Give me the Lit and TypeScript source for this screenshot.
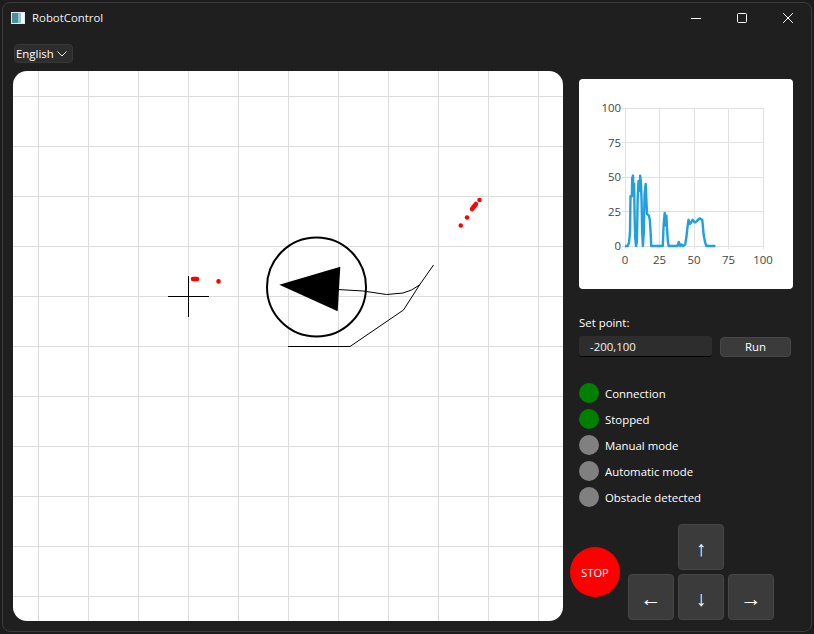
import { LitElement, html, css, svg } from 'lit';
import { customElement, property } from 'lit/decorators.js';

const UI_FONT = css`"Open Sans", "Noto Sans", "Liberation Sans", sans-serif`;

// speed samples read off the plot, [time, value]
const SAMPLES: [number, number][] = [
  [0, 0], [2, 0], [3, 3], [3.6, 10], [4, 36], [5, 36], [5.2, 49], [5.8, 51], [6.2, 37], [6.6, 45], [7, 19], [7.4, 6],
  [8, 0], [8.6, 3], [9.2, 35], [9.8, 47], [10.4, 40], [11, 51], [11.6, 45], [12, 32], [12.4, 11], [13, 0],
  [13.6, 10], [14.2, 38], [15, 45], [15.6, 31], [16, 23], [17.3, 22], [18, 19], [18.6, 9], [19, 0],
  [27.4, 0], [28, 15], [28.8, 24], [29.4, 15], [30, 22], [30.4, 13], [31, 4], [31.6, 0], [38, 0], [39, 3], [40, 0], [41, 1], [42, 0], [43.6, 1],
  [44.6, 7], [45.4, 15], [46, 19], [47, 16], [48, 17], [49, 19], [50.6, 17], [52, 18], [54, 20], [55, 19.5], [56, 19],
  [57, 8], [58, 3], [59, 0], [65.5, 0],
];

// lidar hits, [x1, y1, x2, y2] drawn as round blobs
const OBSTACLES: [number, number, number, number][] = [
  [180, 208, 184, 208], [205.5, 210.3, 205.5, 210.5],
  [466.5, 129, 466.5, 129], [463, 133, 459, 138], [454, 146.5, 454, 146.5], [447.8, 154.5, 447.8, 154.5],
];

@customElement('robot-map')
class RobotMap extends LitElement {
  static styles = css`
    :host {
      display: block;
      width: 550px;
      height: 550px;
      background: #fff;
      border-radius: 14px;
      overflow: hidden;
    }

    svg {
      display: block;
    }

    .grid {
      stroke: #dcdcdc;
      stroke-width: 1;
      shape-rendering: crispEdges;
    }

    .cross {
      stroke: #000;
      stroke-width: 1;
      shape-rendering: crispEdges;
    }

    .trail {
      fill: none;
      stroke: #000;
      stroke-width: 1;
    }

    .body {
      fill: none;
      stroke: #000;
      stroke-width: 2;
    }

    .hit {
      stroke: #f00;
      stroke-width: 4.5;
      stroke-linecap: round;
    }
  `;

  render() {
    const steps = Array.from({ length: 11 }, (_, i) => 25.5 + i * 50);
    return html`
      <svg width="550" height="550" viewBox="0 0 550 550">
        ${steps.map((p) => svg`
          <line class="grid" x1=${p} y1="0" x2=${p} y2="550"></line>
          <line class="grid" x1="0" y1=${p} x2="550" y2=${p}></line>
        `)}
        <line class="cross" x1="155" y1="225.5" x2="196" y2="225.5"></line>
        <line class="cross" x1="175.5" y1="205" x2="175.5" y2="246"></line>
        <polyline class="trail" points="275,275.5 337,275.5 390.5,239 406.5,214 420.5,194"></polyline>
        <polyline class="trail" points="325,218.5 350,220 373.5,223.5 390,222 398.5,219 406.5,214"></polyline>
        <circle class="body" cx="303.5" cy="216" r="49.5"></circle>
        <polygon points="266.3,213.7 327.3,195.7 324.7,240.3" fill="#000"></polygon>
        ${OBSTACLES.map(([x1, y1, x2, y2]) => svg`<line class="hit" x1=${x1} y1=${y1} x2=${x2} y2=${y2}></line>`)}
      </svg>
    `;
  }
}

@customElement('speed-chart')
class SpeedChart extends LitElement {
  static styles = css`
    :host {
      display: block;
      width: 214px;
      height: 210px;
      background: #fff;
      border-radius: 4px;
    }

    svg {
      display: block;
    }

    .grid {
      stroke: #e0e0e0;
      stroke-width: 1;
      shape-rendering: crispEdges;
    }

    .tick {
      font: 11.4px ${UI_FONT};
      fill: #444;
    }

    .line {
      fill: none;
      stroke: #22a0dd;
      stroke-width: 2.4;
      stroke-linejoin: round;
    }
  `;

  @property({ type: Array }) samples: [number, number][] = SAMPLES;

  render() {
    const left = 46;
    const top = 29;
    const size = 138;
    const ticks = [0, 25, 50, 75, 100];
    const px = (v: number) => left + (v / 100) * size;
    const py = (v: number) => top + size - (v / 100) * size;
    const points = this.samples.map(([t, v]) => `${px(t).toFixed(1)},${py(v).toFixed(1)}`).join(' ');
    return html`
      <svg width="214" height="210" viewBox="0 0 214 210">
        ${ticks.map((t) => svg`
          <line class="grid" x1=${px(t)} y1=${top} x2=${px(t)} y2=${top + size + 3}></line>
          <line class="grid" x1=${left - 3} y1=${py(t)} x2=${left + size} y2=${py(t)}></line>
          <text class="tick" x=${left - 4} y=${py(t) + 4} text-anchor="end">${t}</text>
          <text class="tick" x=${px(t)} y=${top + size + 18} text-anchor="middle">${t}</text>
        `)}
        <polyline class="line" points=${points}></polyline>
      </svg>
    `;
  }
}

@customElement('app-root')
export class AppRoot extends LitElement {
  static styles = css`
    :host {
      display: block;
      width: 814px;
      height: 634px;
      background: #1c1c1c;
      font-family: ${UI_FONT};
      font-size: 11.4px;
      color: #fff;
      overflow: hidden;
    }

    .window {
      box-sizing: border-box;
      margin: 2px;
      width: 810px;
      height: 630px;
      border: 1px solid #3c3c3c;
      border-radius: 8px;
      background: #1f1f1f;
      display: flex;
      flex-direction: column;
    }

    .titlebar {
      height: 29px;
      flex: none;
      display: flex;
      align-items: center;
      padding-left: 8px;
    }

    .app-icon {
      display: block;
      margin-right: 7px;
    }

    .title {
      color: #f0f0f0;
    }

    .caption {
      margin-left: auto;
      display: flex;
    }

    .caption-btn {
      width: 46px;
      height: 29px;
      display: flex;
      align-items: center;
      justify-content: center;
    }

    .content {
      flex: 1;
      display: grid;
      grid-template-columns: 557px 1fr;
      padding-left: 10px;
    }

    .left {
      display: flex;
      flex-direction: column;
      padding-top: 12px;
    }

    .combo {
      box-sizing: border-box;
      width: 59px;
      height: 19px;
      margin: 0 0 8px 1px;
      display: flex;
      align-items: center;
      justify-content: space-between;
      padding: 0 5px 0 1px;
      background: #2d2d2d;
      border: 1px solid #383838;
      border-radius: 4px;
    }

    .right {
      display: flex;
      flex-direction: column;
      padding: 47px 0 0 9px;
    }

    .setpoint-label {
      margin-top: 26px;
      height: 16px;
      line-height: 16px;
    }

    .setpoint {
      margin-top: 5px;
      display: flex;
      gap: 8px;
      align-items: flex-start;
    }

    .input {
      box-sizing: border-box;
      width: 133px;
      height: 21px;
      line-height: 21px;
      padding-left: 11px;
      background: #2d2d2d;
      border-bottom: 1px solid #000;
      border-radius: 3px;
      color: #f2f2f2;
    }

    .run {
      box-sizing: border-box;
      width: 71px;
      height: 20px;
      margin-top: 1px;
      line-height: 18px;
      text-align: center;
      background: #3b3b3b;
      border: 1px solid #474747;
      border-radius: 4px;
    }

    .status {
      margin-top: 26px;
      display: flex;
      flex-direction: column;
      gap: 6px;
    }

    .status-row {
      display: flex;
      align-items: center;
      gap: 6px;
      height: 20px;
    }

    .led {
      width: 20px;
      height: 20px;
      border-radius: 50%;
      background: #808080;
    }

    .led.on {
      background: #008000;
    }

    .drive {
      margin: 16px 0 0 -9px;
      padding-top: 1px;
      display: flex;
      align-items: flex-end;
      gap: 8px;
    }

    .stop {
      width: 50px;
      height: 50px;
      margin-bottom: 23px;
      border-radius: 50%;
      background: #f00;
      display: flex;
      align-items: center;
      justify-content: center;
      font-size: 11px;
    }

    .pad {
      display: grid;
      grid-template-columns: repeat(3, 46px);
      grid-template-rows: repeat(2, 46px);
      gap: 4px;
    }

    .key {
      box-sizing: border-box;
      display: flex;
      align-items: center;
      justify-content: center;
      background: #3b3b3b;
      border: 1px solid #474747;
      border-radius: 4px;
      font-family: "Liberation Sans", sans-serif;
      font-size: 21px;
      padding-top: 3px;
    }

    .key.up {
      grid-column: 2;
      grid-row: 1;
    }

    .key.bottom {
      grid-row: 2;
    }
  `;

  private statuses = [
    { label: 'Connection', on: true },
    { label: 'Stopped', on: true },
    { label: 'Manual mode', on: false },
    { label: 'Automatic mode', on: false },
    { label: 'Obstacle detected', on: false },
  ];

  render() {
    return html`
      <div class="window">
        <div class="titlebar">
          <svg class="app-icon" width="14" height="12" viewBox="0 0 14 12">
            <rect width="14" height="12" fill="#e4e8ea"></rect>
            <rect x="1" y="1" width="6" height="10" fill="#4a8f9a"></rect>
            <rect x="7" y="1" width="3" height="10" fill="#9cc3c9"></rect>
            <rect x="10" y="1" width="3" height="10" fill="#f4f6f7"></rect>
          </svg>
          <span class="title">RobotControl</span>
          <div class="caption">
            <div class="caption-btn">
              <svg width="10" height="10" viewBox="0 0 10 10"><path d="M0 5.5H10" stroke="#fff" fill="none" shape-rendering="crispEdges"></path></svg>
            </div>
            <div class="caption-btn">
              <svg width="10" height="10" viewBox="0 0 10 10"><rect x=".5" y=".5" width="9" height="9" rx="1" stroke="#fff" fill="none"></rect></svg>
            </div>
            <div class="caption-btn">
              <svg width="10" height="10" viewBox="0 0 10 10"><path d="M0 0L10 10M10 0L0 10" stroke="#fff" fill="none"></path></svg>
            </div>
          </div>
        </div>
        <div class="content">
          <div class="left">
            <div class="combo">
              <span>English</span>
              <svg width="10" height="6" viewBox="0 0 10 6"><path d="M.5 .5L5 5L9.5 .5" stroke="#e8e8e8" fill="none"></path></svg>
            </div>
            <robot-map></robot-map>
          </div>
          <div class="right">
            <speed-chart></speed-chart>
            <div class="setpoint-label">Set point:</div>
            <div class="setpoint">
              <div class="input">-200,100</div>
              <div class="run">Run</div>
            </div>
            <div class="status">
              ${this.statuses.map((s) => html`
                <div class="status-row">
                  <div class="led ${s.on ? 'on' : ''}"></div>
                  <span>${s.label}</span>
                </div>
              `)}
            </div>
            <div class="drive">
              <div class="stop">STOP</div>
              <div class="pad">
                <div class="key up">↑</div>
                <div class="key bottom">←</div>
                <div class="key bottom">↓</div>
                <div class="key bottom">→</div>
              </div>
            </div>
          </div>
        </div>
      </div>
    `;
  }
}
